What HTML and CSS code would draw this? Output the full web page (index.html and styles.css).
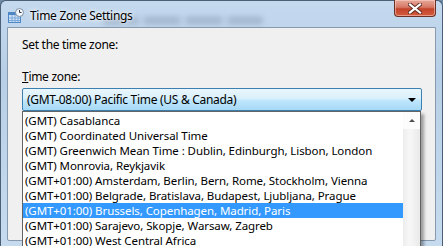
FILE: index.html
```html
<!DOCTYPE html>
<html lang="en">

<head>
    <meta charset="UTF-8">
    <title>Time Zone Settings</title>
    <link rel="stylesheet" href="styles.css">
</head>

<body>
    <div class="window">
        <div class="titlebar">
            <svg class="appIcon" width="16" height="16" viewBox="0 0 16 16">
                <rect x="0.5" y="4.5" width="12" height="10" fill="#cfe3f7" stroke="#4f86c6"/>
                <rect x="1" y="5" width="11" height="2" fill="#4f86c6"/>
                <path d="M1 10h11M1 12.5h11M4 7v7M7 7v7M10 7v7" stroke="#7aa8da" stroke-width="1"/>
                <circle cx="11.5" cy="4.5" r="4" fill="#f4f8fc" stroke="#7d8fa3"/>
                <path d="M11.5 2v2.5h2" stroke="#334" stroke-width="1" fill="none"/>
            </svg>
            <span class="title">Time Zone Settings</span>
            <div class="ghost"></div>
            <div class="closeBtn">
                <svg width="14" height="11" viewBox="0 0 14 11">
                    <path d="M2 1.5l10 8M12 1.5l-10 8" stroke="#5a2a22" stroke-width="4" stroke-linecap="square"/>
                    <path d="M2 1.5l10 8M12 1.5l-10 8" stroke="#fff" stroke-width="2.2" stroke-linecap="square"/>
                </svg>
            </div>
        </div>
        <div class="client">
            <div class="label">Set the time zone:</div>
            <div class="label zoneLabel"><u>T</u>ime zone:</div>
            <div class="combo">
                <div class="comboBox">
                    <span>(GMT-08:00) Pacific Time (US &amp; Canada)</span>
                    <span class="arrow"></span>
                </div>
                <div class="dropList">
                    <ul class="items">
                        <li>(GMT) Casablanca</li>
                        <li>(GMT) Coordinated Universal Time</li>
                        <li>(GMT) Greenwich Mean Time : Dublin, Edinburgh, Lisbon, London</li>
                        <li>(GMT) Monrovia, Reykjavik</li>
                        <li>(GMT+01:00) Amsterdam, Berlin, Bern, Rome, Stockholm, Vienna</li>
                        <li>(GMT+01:00) Belgrade, Bratislava, Budapest, Ljubljana, Prague</li>
                        <li class="selected">(GMT+01:00) Brussels, Copenhagen, Madrid, Paris</li>
                        <li>(GMT+01:00) Sarajevo, Skopje, Warsaw, Zagreb</li>
                        <li>(GMT+01:00) West Central Africa</li>
                    </ul>
                    <div class="scrollbar">
                        <div class="scrollUp"><span class="upArrow"></span></div>
                    </div>
                </div>
            </div>
        </div>
    </div>
</body>

</html>
```

FILE: styles.css
```css
html,
body {
    margin: 0;
    padding: 0;
    width: 443px;
    height: 246px;
    overflow: hidden;
    background: #6f8aa6;
}

body {
    font-family: "Noto Sans", "Open Sans", sans-serif;
    font-size: 12px;
    letter-spacing: -0.3px;
    color: #000;
}

.window {
    width: 443px;
    height: 246px;
    box-sizing: border-box;
    border: 1px solid #4b5f75;
    border-bottom: none;
    border-radius: 6px 6px 0 0;
    background: linear-gradient(to bottom, #c4d9ee 0%, #b7cfe6 30%, #c7dbef 100%);
    padding: 0 6px 5px 6px;
    display: flex;
    flex-direction: column;
}

.titlebar {
    height: 26px;
    display: flex;
    align-items: center;
    position: relative;
}

.appIcon {
    margin-left: 1px;
    margin-top: 3px;
}

.title {
    margin-left: 6px;
    margin-top: 2px;
    text-shadow: 0 0 6px #fff, 0 0 3px #fff;
    position: relative;
    z-index: 1;
}

.ghost {
    position: absolute;
    left: 96px;
    top: 15px;
    width: 160px;
    height: 9px;
    border-radius: 4px;
    background: repeating-linear-gradient(to right, rgba(90, 110, 134, 0.25) 0 34px, rgba(90, 110, 134, 0.08) 34px 42px);
    filter: blur(2.5px);
}

.closeBtn {
    margin-left: auto;
    align-self: flex-start;
    margin-top: -1px;
    width: 42px;
    height: 17px;
    box-sizing: border-box;
    border: 1px solid #6b2f27;
    border-top: none;
    border-radius: 0 0 4px 4px;
    background: linear-gradient(to bottom, #e8a89b 0%, #d77966 45%, #c3442c 55%, #d35b3d 100%);
    box-shadow: inset 0 0 0 1px rgba(255, 220, 210, 0.5);
    display: flex;
    align-items: center;
    justify-content: center;
}

.client {
    flex: 1;
    background: #f0f0f0;
    border: 1px solid #8799ad;
    border-radius: 0 0 2px 2px;
    padding: 9px 13px 0 14px;
    position: relative;
}

.label {
    line-height: 16px;
}

.zoneLabel {
    margin-top: 16px;
}

.combo {
    position: relative;
    margin-top: 3px;
}

.comboBox {
    height: 23px;
    box-sizing: border-box;
    border: 1px solid #3c7fb1;
    border-radius: 2px;
    background: linear-gradient(to bottom, #eaf6fd 0%, #d9f0fc 45%, #bee6fd 55%, #a7d9f5 100%);
    display: flex;
    align-items: center;
    padding: 0 5px 0 4px;
}

.arrow {
    margin-left: auto;
    width: 0;
    height: 0;
    border-left: 4px solid transparent;
    border-right: 4px solid transparent;
    border-top: 4px solid #000;
}

.dropList {
    position: absolute;
    top: 23px;
    left: 0;
    width: 399px;
    height: 140px;
    box-sizing: border-box;
    background: #fff;
    border: 1px solid #646464;
    border-bottom: none;
    box-shadow: 3px 3px 3px rgba(0, 0, 0, 0.35);
    display: flex;
    overflow: hidden;
}

.items {
    list-style: none;
    margin: 0;
    padding: 1px 0 0 0;
    flex: 1;
}

.items li {
    height: 15px;
    line-height: 15px;
    font-size: 11.5px;
    letter-spacing: -0.08px;
    padding-left: 2px;
    white-space: nowrap;
}

.items .selected {
    background: #3399ff;
    color: #fff;
}

.scrollbar {
    width: 17px;
    background: linear-gradient(to right, #ededed, #f7f7f7 40%, #eaeaea);
}

.scrollUp {
    height: 17px;
    background: #fcfcfc;
    display: flex;
    align-items: center;
    justify-content: center;
}

.upArrow {
    width: 0;
    height: 0;
    border-left: 3px solid transparent;
    border-right: 3px solid transparent;
    border-bottom: 3px solid #4d4d4d;
}
```
